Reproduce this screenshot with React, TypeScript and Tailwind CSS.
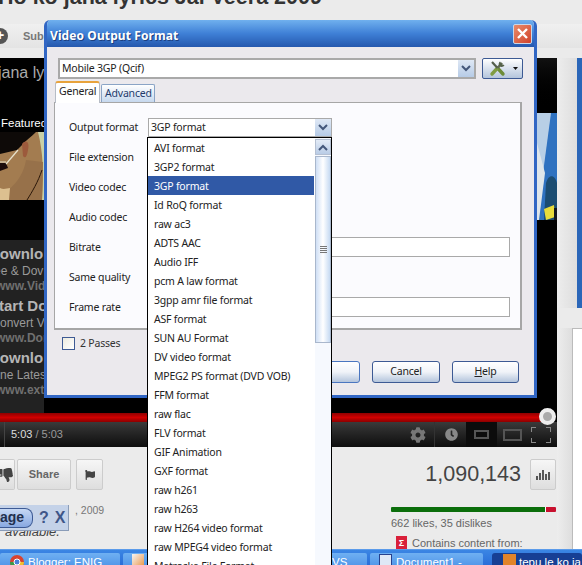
import React from 'react';
import { FaCog, FaClock, FaFlag, FaThumbsDown } from 'react-icons/fa';

const formats = [
  'AVI format', '3GP2 format', '3GP format', 'Id RoQ format', 'raw ac3', 'ADTS AAC', 'Audio IFF',
  'pcm A law format', '3gpp amr file format', 'ASF format', 'SUN AU Format', 'DV video format',
  'MPEG2 PS format (DVD VOB)', 'FFM format', 'raw flac', 'FLV format', 'GIF Animation', 'GXF format',
  'raw h261', 'raw h263', 'raw H264 video format', 'raw MPEG4 video format', 'Matroska File Format',
];

const labels = ['Output format', 'File extension', 'Video codec', 'Audio codec', 'Bitrate', 'Same quality', 'Frame rate'];

const Chevron = ({ up }: { up?: boolean }) => (
  <svg width="10" height="7" viewBox="0 0 10 7">
    <path d={up ? 'M1 6 L5 2 L9 6' : 'M1 1 L5 5 L9 1'} fill="none" stroke="#44577a" strokeWidth="2" />
  </svg>
);

const XpButton = ({ children, className }: { children?: React.ReactNode; className: string }) => (
  <div className={`h-[22px] flex items-center justify-center rounded-[3px] border border-[#3d5a94] bg-gradient-to-b from-white via-[#f0f3f8] to-[#b4c5dc] ${className}`}>
    {children}
  </div>
);

const ManPhoto = () => (
  <svg width="44" height="68" viewBox="0 0 44 68" className="block">
    <rect width="44" height="68" fill="#a37c50" />
    <path d="M38 0 H44 V68 H42 C44 40 43 20 38 0Z" fill="#c9d0a6" />
    <path d="M0 0 H36 C31 5 26 8 23 12 L17 18 L0 22Z" fill="#0e0a08" />
    <path d="M22 12 C26 7 30 10 28 18 C27 25 25 27 23 24Z" fill="#9c5a3c" />
    <path d="M26 28 C24 40 18 50 8 58 L0 60 V68 H42 L43 30Z" fill="#97714a" />
    <path d="M0 56 C4 58 7 56 10 56 L9 68 H0Z" fill="#dcc090" />
    <path d="M0 31 H6 L8 36 L0 39Z" fill="#1c0c0c" />
    <path d="M6 32 L18 18" stroke="#e8e4d0" strokeWidth="1.2" />
    <path d="M0 30 H6" stroke="#e8e4d0" strokeWidth="1" />
    <path d="M42 38 C38 50 32 60 27 68" stroke="#2a1608" strokeWidth="1" fill="none" />
  </svg>
);

const SkyPhoto = () => (
  <svg width="20" height="107" viewBox="0 0 20 107" className="block">
    <rect width="20" height="107" fill="#2f72c0" />
    <path d="M0 0 H14 L10 30 L6 60 L0 80Z" fill="#b8cfe6" />
    <path d="M0 30 L8 60 L2 107 H0Z" fill="#dfe6ea" />
    <path d="M9 70 C12 60 18 62 20 70 V107 H7Z" fill="#1c4d72" />
    <path d="M7 96 L17 92 L18 104 L9 107Z" fill="#e8dc3c" />
    <path d="M17 95 H20 V107 H17Z" fill="#141820" />
  </svg>
);

const sideText = [
  { a: 'Downlo', b: 'ee & Dov', c: 'www.Vid' },
  { a: 'tart Do', b: 'onvert Vi', c: 'www.Dor' },
  { a: 'Downlo', b: 'ne Latest', c: 'www.ext' },
];

const Page = () => (
  <div className="flex flex-col h-full font-['Liberation_Sans',sans-serif]">
    {/* title, cut by the top of the shot */}
    <div className="h-[20px] overflow-hidden shrink-0">
      <div className="-mt-[16px] -ml-[2px] text-[21.5px] leading-[26px] font-bold text-[#333] whitespace-nowrap">Ho ko jana lyrics Jal Veera 2009</div>
    </div>
    <div className="h-[38px] shrink-0 flex items-center pb-[10px] pt-[4px]">
      <div className="flex items-center h-full w-full bg-gradient-to-b from-[#f0f0f0] to-[#e4e4e4]">
        <div className="w-[16px] h-[16px] -ml-[8px] rounded-full bg-[#555] text-white text-[14px] leading-[15px] font-bold text-center">+</div>
        <span className="ml-[15px] text-[11px] font-bold text-[#777]">Sub</span>
      </div>
    </div>

    {/* video */}
    <div className="flex h-[389px] shrink-0">
      <div className="w-[557px] bg-black flex flex-col">
        <div className="flex h-[355px]">
          <div className="w-[44px] flex flex-col overflow-hidden shrink-0">
            <div className="h-[182px] flex flex-col">
              <div className="h-[27px] pt-[6px] -ml-[2px] text-[16px] leading-[18px] text-[#aaa] whitespace-nowrap">jana ly</div>
              <div className="mt-[28px] h-[20px] ml-px text-[11.5px] leading-[20px] text-white whitespace-nowrap">Featured</div>
              <div className="-mt-px"><ManPhoto /></div>
            </div>
            <div className="flex-1 bg-[#222] pt-[4px]">
              {sideText.map((s, i) => (
                <div key={i} className="h-[52px] whitespace-nowrap">
                  <div className={`h-[19px] text-[15px] leading-[19px] font-bold text-[#b5b5b5] ${i === 1 ? '-ml-[1px]' : '-ml-[11px]'}`}>{s.a}</div>
                  <div className={`h-[16px] text-[12px] leading-[16px] text-[#9a9a9a] ${i === 0 ? '-ml-[6px]' : 'ml-0'}`}>{s.b}</div>
                  <div className="h-[15px] -ml-[4px] text-[12px] leading-[15px] font-bold text-[#707070]">{s.c}</div>
                </div>
              ))}
            </div>
          </div>
          <div className="flex-1" />
          <div className="w-[20px] flex flex-col shrink-0">
            <div className="h-[55px] bg-gradient-to-b from-[#111] to-black" />
            <SkyPhoto />
          </div>
        </div>
        <div className="h-[9px] bg-gradient-to-b from-[#8f0000] via-[#d00000] to-[#8c0000] mr-[9px]" />
        <div className="flex-1 flex items-center bg-gradient-to-b from-[#3a3a3a] to-[#0e0e0e]">
          <div className="w-px h-full bg-[#444] ml-[4px]" />
          <span className="ml-[6px] text-[11px] text-[#ddd]">5:03 <span className="text-[#999]">/ 5:03</span></span>
          <div className="flex-1" />
          <FaCog className="text-[#777] mr-[8px]" size={16} />
          <div className="w-px h-full bg-[#333] mr-[10px]" />
          <FaClock className="text-[#888] mr-[8px]" size={13} />
          <div className="h-full w-[31px] bg-[#0c0c0c] flex items-center justify-center">
            <div className="w-[15px] h-[9px] border-2 border-[#555]" />
          </div>
          <div className="h-full w-[30px] flex items-center justify-center">
            <div className="w-[19px] h-[12px] border-2 border-[#555]" />
          </div>
          <svg width="20" height="16" viewBox="0 0 20 16" className="ml-[4px] mr-[6px]">
            <path d="M0 5V0H5M15 0H20V5M20 11V16H15M5 16H0V11" fill="none" stroke="#888" strokeWidth="2" />
          </svg>
        </div>
      </div>
      <div className="flex-1 flex flex-col">
        <div className="flex h-[250px]">
          <div className="w-[20px] bg-gradient-to-r from-[#ededed] to-[#dedede]" />
          <div className="flex-1 bg-[#2a66b8]" />
        </div>
        <div className="flex-1 flex mt-[20px]">
          <div className="w-[15px] bg-gradient-to-r from-[#ededed] to-[#dedede]" />
          <div className="flex-1 bg-white border-l border-t border-[#bbb]" />
        </div>
      </div>
    </div>

    {/* under the video */}
    <div className="flex h-[102px] shrink-0">
      <div className="w-[557px] flex justify-between bg-[#ebebeb]">
        <div className="w-[147px]">
          <div className="flex mt-[12px] h-[31px]">
            <div className="w-[15px] border border-l-0 border-[#ccc] rounded-r-[2px] bg-gradient-to-b from-[#f6f6f6] to-[#dedede] flex items-center justify-end pr-[1px] overflow-hidden">
              <FaThumbsDown className="text-[#444] shrink-0" size={14} />
            </div>
            <div className="ml-[2px] w-[54px] border border-[#ccc] rounded-[2px] bg-gradient-to-b from-[#f6f6f6] to-[#dedede] flex items-center justify-center text-[11px] font-bold text-[#666]">Share</div>
            <div className="ml-[5px] w-[27px] border border-[#ccc] rounded-[2px] bg-gradient-to-b from-[#f6f6f6] to-[#dedede] flex items-center justify-center">
              <FaFlag className="text-[#444]" size={10} />
            </div>
          </div>
          <div className="ml-[75px] mt-[12px] text-[10.5px] leading-[16px] text-[#777]">, 2009</div>
          <div className="ml-[5px] mt-[6px] text-[13px] leading-[15px] italic text-[#444]">available.</div>
        </div>
        <div className="w-[165px] mr-px">
          <div className="flex justify-end items-center mt-[12px] h-[31px]">
            <span className="text-[21.5px] text-[#444] mr-[9px]">1,090,143</span>
            <div className="w-[26px] h-[31px] border border-[#ccc] rounded-[2px] bg-gradient-to-b from-[#f6f6f6] to-[#dedede] flex items-center justify-center">
              <svg width="15" height="10" viewBox="0 0 15 10">
                <path d="M0 6h2v4H0zM3 3h2v7H3zM6 0h2v10H6zM9 4h2v6H9zM12 2h2v8h-2z" fill="#555" />
              </svg>
            </div>
          </div>
          <div className="flex mt-[17px] h-[5px] rounded-[1px] overflow-hidden">
            <div className="w-[154px] bg-[#0b6e0b]" />
            <div className="w-px bg-white" />
            <div className="flex-1 bg-[#c8102e]" />
          </div>
          <div className="mt-[4px] text-[11px] leading-[15px] text-[#666]">662 likes, 35 dislikes</div>
          <div className="flex items-center mt-[5px] ml-[5px]">
            <div className="w-[11px] h-[15px] bg-[#d9203a] flex items-center justify-center text-[9px] font-bold text-white leading-none">Σ</div>
            <span className="ml-[5px] text-[11px] leading-[15px] text-[#666] whitespace-nowrap">Contains content from:</span>
          </div>
        </div>
      </div>
      <div className="flex-1 flex">
        <div className="w-[15px] bg-gradient-to-r from-[#ededed] to-[#dedede]" />
        <div className="flex-1 bg-white border-l border-[#bbb]" />
      </div>
    </div>

    {/* taskbar */}
    <div className="flex-1 flex items-start pt-[3px] overflow-hidden border-t border-[#5b9bea] bg-gradient-to-b from-[#3b86e4] to-[#2a6ed8] text-white text-[11.5px] leading-[14px]">
      <div className="w-[120px] h-[16px] shrink-0 rounded-t-[2px] bg-gradient-to-b from-[#6fb0f2] to-[#4a90e6] flex pl-[10px] gap-[4px]">
        <svg width="14" height="14" viewBox="0 0 14 14" className="mt-[2px] shrink-0">
          <circle cx="7" cy="7" r="7" fill="#d8432f" />
          <path d="M7 7 L14 7 A7 7 0 0 1 3.5 13Z" fill="#f0c030" />
          <path d="M7 7 L3.5 13 A7 7 0 0 1 0 7Z" fill="#3c9a48" />
          <circle cx="7" cy="7" r="3" fill="#4a80d8" stroke="white" />
        </svg>
        <span className="pt-[2px] whitespace-nowrap">Blogger: ENIG</span>
      </div>
      <div className="ml-[3px] w-[30px] h-[16px] shrink-0 rounded-t-[2px] bg-gradient-to-b from-[#6fb0f2] to-[#4a90e6] pl-[9px]">
        <div className="w-[12px] h-[14px] mt-[1px] bg-gradient-to-br from-[#f4f4f4] to-[#e8902c]" />
      </div>
      <div className="w-[176px] shrink-0" />
      <div className="w-[38px] h-[16px] shrink-0 pt-[2px] bg-gradient-to-b from-[#6fb0f2] to-[#4a90e6] rounded-t-[2px] pl-[3px]">VS</div>
      <div className="ml-[3px] w-[113px] h-[16px] shrink-0 rounded-t-[2px] bg-gradient-to-b from-[#6fb0f2] to-[#4a90e6] flex pl-[9px] gap-[4px]">
        <div className="w-[13px] h-[14px] mt-[1px] bg-[#dfe8f6] border border-[#26418e]" />
        <span className="pt-[2px] whitespace-nowrap">Document1 -</span>
      </div>
      <div className="ml-[9px] flex-1 h-[16px] rounded-t-[3px] bg-[#173f94] flex pl-[11px] gap-[3px]">
        <div className="w-[13px] h-[14px] mt-[1px] bg-[#e2842a] shrink-0" />
        <span className="pt-[2px] whitespace-nowrap">tepu le ko ja</span>
      </div>
    </div>
  </div>
);

const FormatDialog = () => (
  <div className="absolute left-[44px] top-[20px] w-[493px] h-[378px] flex flex-col rounded-t-[6px] overflow-hidden border-x-[3px] border-b-[3px] border-[#3166c4] font-['Noto_Sans',sans-serif] text-[10.5px] tracking-[-0.2px] text-[#222]">
    <div className="h-[27px] shrink-0 flex items-center justify-between pl-[3px] pr-[2px] -mx-[3px] bg-gradient-to-b from-[#70b0ee] via-[#3f80d6] to-[#2558ae]">
      <span className="ml-[3px] mt-[4px] text-[12px] font-bold text-white tracking-[0.1px] [text-shadow:1px_1px_0_#1c3f80]">Video Output Format</span>
      <div className="w-[19px] h-[20px] mr-[3px] rounded-[2px] border border-[#c9d6e8] bg-gradient-to-br from-[#e88a6a] to-[#d0402a] flex items-center justify-center">
        <svg width="11" height="11" viewBox="0 0 11 11">
          <path d="M1 1 L10 10 M10 1 L1 10" stroke="white" strokeWidth="2.4" />
        </svg>
      </div>
    </div>
    <div className="flex-1 flex flex-col bg-[#ebe9ed]">
      <div className="flex mt-[11px] pl-[11px] pr-[11px] gap-[6px]">
        <div className="flex-1 h-[21px] flex items-center border-2 border-[#a9a9a9] bg-white">
          <span className="flex-1 pl-[2px]">Mobile 3GP (Qcif)</span>
          <div className="w-[16px] h-full bg-gradient-to-b from-[#dfe8f5] to-[#b6cbe6] flex items-center justify-center"><Chevron /></div>
        </div>
        <div className="w-[41px] h-[21px] flex items-center rounded-[2px] border border-[#3d5a94] bg-gradient-to-b from-white to-[#b4c5dc] pl-[6px]">
          <svg width="17" height="17" viewBox="0 0 17 17">
            <path d="M8.5 8 L14 14" stroke="#6d8c38" strokeWidth="3.4" strokeLinecap="round" />
            <path d="M8.5 8 L3 14" stroke="#7f9c42" strokeWidth="3.4" strokeLinecap="round" />
            <path d="M3 2 L8.5 8" stroke="#555f4c" strokeWidth="2.2" />
            <path d="M13 3 L8.5 8" stroke="#5f6a52" strokeWidth="2.6" />
            <path d="M11 1.5 A3 3 0 1 0 15.5 5 L13.2 4.6 L12.3 3.6Z" fill="#55624a" />
          </svg>
          <svg width="5" height="3" viewBox="0 0 5 3" className="ml-[7px]"><path d="M0 0H5L2.5 3Z" fill="#111" /></svg>
        </div>
      </div>
      <div className="flex items-end h-[23px] ml-[8px]">
        <div className="w-[45px] h-[22px] border-t-2 border-[#e8a33c] border-x border-x-[#b6bcc6] rounded-t-[3px] bg-white pl-[3px] pt-[1px] -mb-px relative">General</div>
        <div className="ml-px w-[54px] h-[18px] border border-b-0 border-[#8aa4c6] rounded-t-[2px] bg-gradient-to-b from-white to-[#c6d8ee] pl-[3px] leading-[17px] text-[#1f3b6c]">Advanced</div>
      </div>
      <div className="ml-[7px] mr-[12px] h-[228px] border border-[#a6a6a6] border-r-2 border-b-2 bg-[#fbfbfe] pt-[9px] pl-[14px]">
        {labels.map((l, i) => (
          <div key={l} className="flex items-center h-[30px]">
            <span className="w-[79px] shrink-0 pt-[2px]">{l}</span>
            {i === 0 && (
              <div className="w-[184px] h-[19px] flex items-center border border-[#a9a9a9] bg-white">
                <span className="flex-1 pl-[2px] pt-[2px]">3GP format</span>
                <div className="w-[16px] h-full bg-gradient-to-b from-[#dfe8f5] to-[#b6cbe6] flex items-center justify-center"><Chevron /></div>
              </div>
            )}
            {(i === 4 || i === 6) && <div className="w-[362px] h-[20px] border border-[#a9a9a9] bg-white" />}
          </div>
        ))}
      </div>
      <div className="flex items-center mt-[7px] ml-[15px] h-[13px] leading-[13px]">
        <div className="w-[13px] h-[13px] border border-[#3d5a94] bg-gradient-to-br from-[#ecebe0] to-white" />
        <span className="ml-[5px] text-[#333]">2 Passes</span>
      </div>
      <div className="flex justify-end gap-[12px] mt-[11px] mr-[15px]">
        <XpButton className="w-[68px] border-[#4a76c0] from-[#dbe8f8] to-[#a8c4e8]"><span className="mr-[16px]">OK</span></XpButton>
        <XpButton className="w-[68px]">Cancel</XpButton>
        <XpButton className="w-[67px]"><span><span className="underline">H</span>elp</span></XpButton>
      </div>
    </div>
  </div>
);

const FormatList = () => (
  <div className="absolute left-[147px] top-[137px] w-[185px] h-[440px] flex border-x border-t border-black bg-white font-['Noto_Sans',sans-serif] text-[10.5px] tracking-[-0.2px] text-[#222]">
    <div className="w-[167px] shrink-0">
      {formats.map((f) => (
        <div key={f} className={`h-[19px] mr-px pl-[6px] pt-px leading-[19px] whitespace-nowrap ${f === '3GP format' ? 'bg-[#3059a6] text-white' : ''}`}>{f}</div>
      ))}
    </div>
    <div className="flex-1 flex flex-col pt-px bg-[#f6f9fe]">
      <div className="h-[16px] border border-[#b5c0d2] bg-gradient-to-b from-[#e3ebf6] to-[#b9cce6] flex items-center justify-center"><Chevron up /></div>
      <div className="h-[187px] mt-px border border-[#a9b7cc] bg-gradient-to-r from-[#cfdff5] via-white to-[#c6daf2] flex flex-col items-center justify-center gap-px">
        <div className="w-[7px] h-px bg-[#777]" />
        <div className="w-[7px] h-px bg-[#777]" />
        <div className="w-[7px] h-px bg-[#777]" />
        <div className="w-[7px] h-px bg-[#777]" />
      </div>
    </div>
  </div>
);

export default function App() {
  return (
    <div className="relative w-[582px] h-[565px] overflow-hidden bg-[#ebebeb]">
      <Page />
      {/* scrubber handle */}
      <div className="absolute left-[539px] top-[408px] w-[17px] h-[17px] rounded-full border-[4px] border-[#eee] bg-[#aaa]" />
      {/* bar of the toolbar notice lying over the page */}
      <div className="absolute left-0 top-[505px] w-[69px] h-[26px] flex items-center border-r border-b border-[#8a9cb8] bg-[#c4d2e8] font-['Liberation_Sans',sans-serif]">
        <div className="w-[33px] h-[20px] rounded-r-[8px] border border-l-0 border-[#3d5a94] bg-gradient-to-b from-[#c6d8f4] to-[#88a8e0] text-[14px] leading-[17px] font-bold text-[#22304e] overflow-hidden whitespace-nowrap">age</div>
        <span className="ml-[4px] w-[14px] h-[17px] text-center text-[16px] leading-[17px] font-bold text-[#3f5688]">?</span>
        <span className="ml-[2px] w-[14px] h-[17px] text-center text-[16px] leading-[17px] font-bold text-[#3f5688]">X</span>
      </div>
      <FormatDialog />
      <FormatList />
    </div>
  );
}
